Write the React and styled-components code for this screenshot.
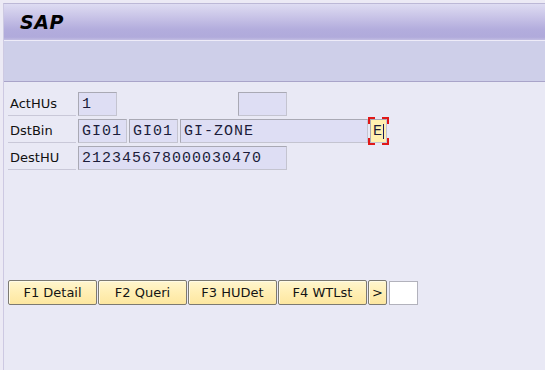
import React from "react";
import styled, { createGlobalStyle } from "styled-components";

const Global = createGlobalStyle`
  html, body { margin: 0; padding: 0; }
  body { background: #eceaf5; font-family: "DejaVu Sans", Verdana, sans-serif; }
`;

const Screen = styled.div`
  min-height: 100vh;
  box-sizing: border-box;
  padding: 3px 0 0 3px;
  background: #eceaf5;
  display: flex;
  flex-direction: column;
`;

const Window = styled.div`
  flex: 1;
  display: flex;
  flex-direction: column;
  border-left: 1px solid #cdc9e2;
  border-top: 1px solid #bcb8d6;
  background: #e9e9f5;
`;

const TitleBar = styled.div`
  height: 36px;
  border-bottom: 1px solid #eeecf8;
  background: linear-gradient(to bottom, #dedcf2 0%, #c6c1e6 40%, #b3addd 70%, #b0aadb 92%, #c2bde2 100%);
  display: flex;
  align-items: center;
  padding-left: 16px;
`;

const Title = styled.div`
  font-family: "DejaVu Sans", Verdana, sans-serif;
  font-weight: bold;
  font-style: italic;
  font-size: 19px;
  color: #000;
  letter-spacing: 0.5px;
`;

const Toolbar = styled.div`
  height: 40px;
  background: #cecfe9;
  border-bottom: 1px solid #a9a4c9;
`;

const Content = styled.div`
  flex: 1;
  padding: 10px 0 0 4px;
  display: flex;
  flex-direction: column;
`;

const Rows = styled.div`
  display: flex;
  flex-direction: column;
  gap: 3px;
`;

const Row = styled.div`
  display: flex;
  align-items: center;
  height: 24px;
`;

const Label = styled.div`
  width: 68px;
  height: 24px;
  margin-right: 2px;
  box-sizing: border-box;
  padding-left: 2px;
  display: flex;
  align-items: center;
  font-size: 13px;
  color: #111;
  border-bottom: 1px solid #c9c8d8;
`;

const Fields = styled.div`
  display: flex;
  gap: 2px;
  align-items: center;
`;

const Field = styled.div`
  position: relative;
  box-sizing: border-box;
  width: ${(p) => p.$w}px;
  height: 24px;
  margin-left: ${(p) => p.$ml || 0}px;
  border: 1px solid #a9a9b4;
  border-right-color: #c4c4d0;
  border-bottom-color: #c4c4d0;
  background: ${(p) => (p.$focus ? "#fff0b0" : "#dedef4")};
  padding-left: ${(p) => (p.$focus ? 2 : 3)}px;
  display: flex;
  align-items: center;
  font-family: "Liberation Mono", "Courier New", monospace;
  font-size: 15px;
  letter-spacing: 1px;
  color: #1c1c3a;
  white-space: nowrap;
`;

const Caret = styled.span`
  display: inline-block;
  width: 1px;
  height: 15px;
  background: #1a1a5a;
`;

const Corner = styled.span`
  position: absolute;
  width: 5px;
  height: 5px;
  border-color: #e01818;
  border-style: solid;
  border-width: 0;
  ${(p) => (p.$t ? "top: -3px; border-top-width: 2px;" : "bottom: -3px; border-bottom-width: 2px;")}
  ${(p) => (p.$l ? "left: -3px; border-left-width: 2px;" : "right: -3px; border-right-width: 2px;")}
`;

const ButtonBar = styled.div`
  margin-top: 110px;
  display: flex;
  gap: 1px;
  align-items: center;
`;

const FKey = styled.button`
  box-sizing: border-box;
  width: ${(p) => p.$w}px;
  height: 25px;
  margin: 0;
  padding: 0;
  border: 1px solid #7c7a72;
  border-radius: 2px;
  box-shadow: inset 1px 1px 0 #fffbe6;
  background: linear-gradient(to bottom, #fff6cf 0%, #ffefb6 45%, #fde7a0 100%);
  font-family: "DejaVu Sans", Verdana, sans-serif;
  font-size: 13px;
  color: #141414;
  display: flex;
  align-items: center;
  justify-content: center;
`;

const Blank = styled.div`
  box-sizing: border-box;
  width: 29px;
  height: 24px;
  margin-left: 1px;
  background: #fff;
  border: 1px solid #b2b2bc;
`;

export default function App() {
  return (
    <>
      <Global />
      <Screen>
        <Window>
          <TitleBar>
            <Title>SAP</Title>
          </TitleBar>
          <Toolbar />
          <Content>
            <Rows>
              <Row>
                <Label>ActHUs</Label>
                <Fields>
                  <Field $w={39}>1</Field>
                  <Field $w={49} $ml={119} />
                </Fields>
              </Row>
              <Row>
                <Label>DstBin</Label>
                <Fields>
                  <Field $w={49}>GI01</Field>
                  <Field $w={49}>GI01</Field>
                  <Field $w={188}>GI-ZONE</Field>
                  <Field $w={17} $focus>
                    E<Caret />
                    <Corner $t $l />
                    <Corner $t />
                    <Corner $l />
                    <Corner />
                  </Field>
                </Fields>
              </Row>
              <Row>
                <Label>DestHU</Label>
                <Fields>
                  <Field $w={209}>212345678000030470</Field>
                </Fields>
              </Row>
            </Rows>
            <ButtonBar>
              <FKey $w={89}>F1 Detail</FKey>
              <FKey $w={89}>F2 Queri</FKey>
              <FKey $w={89}>F3 HUDet</FKey>
              <FKey $w={89}>F4 WTLst</FKey>
              <FKey $w={19}>&gt;</FKey>
              <Blank />
            </ButtonBar>
          </Content>
        </Window>
      </Screen>
    </>
  );
}
